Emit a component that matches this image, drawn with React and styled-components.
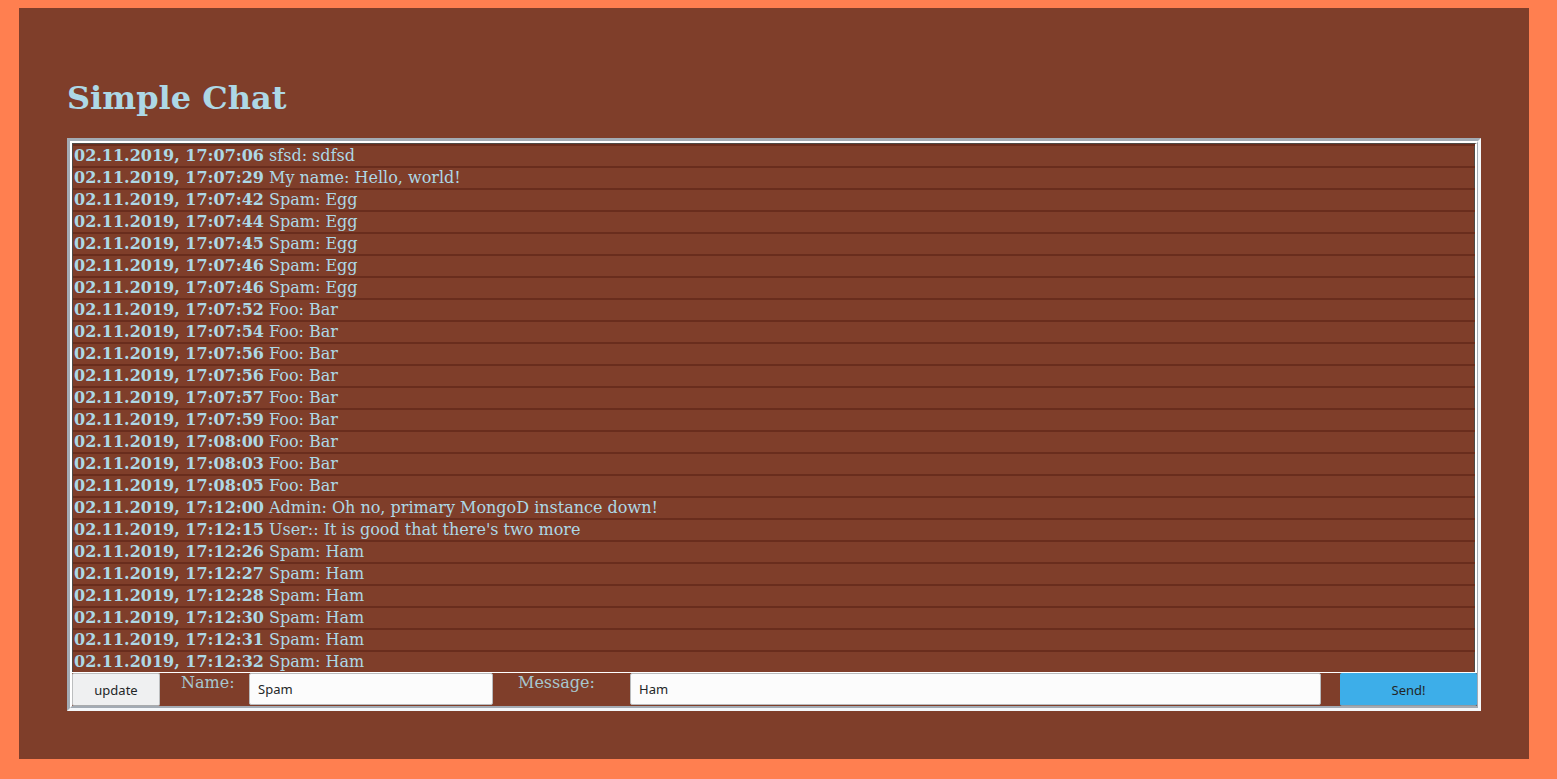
import React from "react";
import styled, { createGlobalStyle } from "styled-components";

const GlobalStyle = createGlobalStyle`
  html {
    height: 100%;
    background: #ff7f50;
  }
  body {
    box-sizing: border-box;
    height: calc(100% - 28px);
    margin: 8px 28px 20px 19px;
    padding: 48px 48px 0 48px;
    background: #7f3e2a;
    font-family: "DejaVu Serif", serif;
    overflow: hidden;
  }
`;

const Title = styled.h1`
  margin: 24px 0 21px;
  font-family: "DejaVu Serif", serif;
  font-size: 32px;
  line-height: 37px;
  font-weight: bold;
  color: #add8e6;
`;

const Frame = styled.div`
  box-sizing: border-box;
  width: 1414px;
  height: 573px;
  border-style: solid;
  border-width: 3px;
  border-color: #a3abb4 #f4f7fa #f4f7fa #a3abb4;
`;

const Inner = styled.div`
  box-sizing: border-box;
  height: 100%;
  display: flex;
  flex-direction: column;
  gap: 1px;
  background: #ffffff;
  border-style: solid;
  border-width: 2px 1px 2px 2px;
  border-color: #ffffff #a3abb4 #a3abb4 #ffffff;
`;

const List = styled.div`
  height: 529px;
  box-sizing: border-box;
  background: #7f3e2a;
  border-style: solid;
  border-width: 1px 2px 0 1px;
  border-color: #4f4a46 #ffffff transparent #4f4a46;
  box-shadow: inset -1px 0 0 #4f4a46;
`;

const Row = styled.div`
  box-sizing: border-box;
  height: 22px;
  line-height: 20px;
  padding-left: 1px;
  font-size: 16px;
  color: #add8e6;
  white-space: nowrap;
  border-top: 2px solid #692d1d;
`;

const Stamp = styled.b`
  font-weight: bold;
`;

const Form = styled.div`
  height: 33px;
  display: flex;
  align-items: flex-start;
  background: #7f3e2a;
`;

const Button = styled.button`
  box-sizing: border-box;
  width: ${(p) => p.$w}px;
  height: 33px;
  margin: 0;
  margin-left: ${(p) => p.$ml || 0}px;
  padding: 0;
  font-family: "Noto Sans", sans-serif;
  font-size: 13px;
  color: #232627;
  background: ${(p) => (p.$primary ? "#3daee9" : "#eff0f1")};
  border: 1px solid ${(p) => (p.$primary ? "#3daee9" : "#bcbebf")};
  border-bottom-color: ${(p) => (p.$primary ? "#8e9aa3" : "#a9abad")};
  border-radius: 2px;
`;

const Label = styled.label`
  box-sizing: border-box;
  width: ${(p) => p.$w}px;
  padding-left: ${(p) => p.$pl}px;
  padding-top: 1px;
  font-family: "DejaVu Serif", serif;
  font-size: 16px;
  line-height: 18px;
  color: #a7c7cf;
`;

const Input = styled.input`
  box-sizing: border-box;
  width: ${(p) => p.$w}px;
  height: 32px;
  margin: 0;
  padding: 0 8px;
  font-family: "Noto Sans", sans-serif;
  font-size: 13px;
  color: #232627;
  background: #fcfcfc;
  border: 1px solid #b9bbbd;
  border-radius: 2px;
  outline: none;
`;

const messages = [
  ["17:07:06", "sfsd: sdfsd"],
  ["17:07:29", "My name: Hello, world!"],
  ["17:07:42", "Spam: Egg"],
  ["17:07:44", "Spam: Egg"],
  ["17:07:45", "Spam: Egg"],
  ["17:07:46", "Spam: Egg"],
  ["17:07:46", "Spam: Egg"],
  ["17:07:52", "Foo: Bar"],
  ["17:07:54", "Foo: Bar"],
  ["17:07:56", "Foo: Bar"],
  ["17:07:56", "Foo: Bar"],
  ["17:07:57", "Foo: Bar"],
  ["17:07:59", "Foo: Bar"],
  ["17:08:00", "Foo: Bar"],
  ["17:08:03", "Foo: Bar"],
  ["17:08:05", "Foo: Bar"],
  ["17:12:00", "Admin: Oh no, primary MongoD instance down!"],
  ["17:12:15", "User:: It is good that there's two more"],
  ["17:12:26", "Spam: Ham"],
  ["17:12:27", "Spam: Ham"],
  ["17:12:28", "Spam: Ham"],
  ["17:12:30", "Spam: Ham"],
  ["17:12:31", "Spam: Ham"],
  ["17:12:32", "Spam: Ham"],
];

export default function App() {
  return (
    <>
      <GlobalStyle />
      <Title>Simple Chat</Title>
      <Frame>
        <Inner>
          <List>
            {messages.map(([t, m], i) => (
              <Row key={i}>
                <Stamp>02.11.2019, {t}</Stamp> {m}
              </Row>
            ))}
          </List>
          <Form>
            <Button $w={88}>update</Button>
            <Label $w={89} $pl={21}>Name:</Label>
            <Input $w={244} defaultValue="Spam" />
            <Label $w={137} $pl={25}>Message:</Label>
            <Input $w={691} defaultValue="Ham" />
            <Button $w={137} $ml={19} $primary>Send!</Button>
          </Form>
        </Inner>
      </Frame>
    </>
  );
}
